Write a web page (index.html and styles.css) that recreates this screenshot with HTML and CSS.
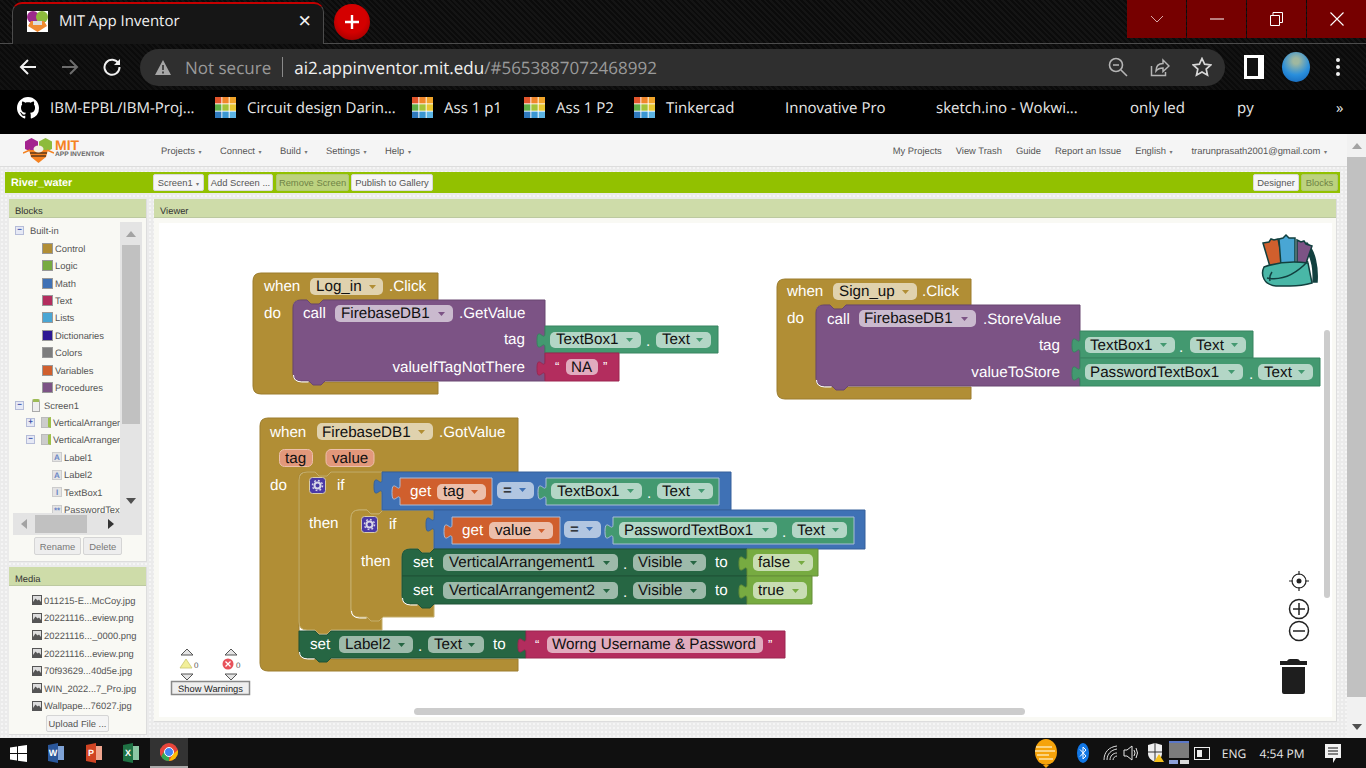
FILE: index.html
```html
<!DOCTYPE html>
<html lang="en">
<head>
    <meta charset="UTF-8">
    <title>MIT App Inventor</title>
    <link rel="stylesheet" href="styles.css">
</head>
<body>

<!-- shared little pictures -->
<svg class="defs" width="0" height="0">
    <symbol id="tinker" viewBox="0 0 21 21">
        <rect width="21" height="21" fill="#fff"/>
        <rect x="0" y="0" width="6.4" height="6.4" fill="#e2552c"/><rect x="7.3" y="0" width="6.4" height="6.4" fill="#f0862a"/><rect x="14.6" y="0" width="6.4" height="6.4" fill="#f0a42a"/>
        <rect x="0" y="7.3" width="6.4" height="6.4" fill="#5fae45"/><rect x="7.3" y="7.3" width="6.4" height="6.4" fill="#a5c338"/><rect x="14.6" y="7.3" width="6.4" height="6.4" fill="#e8c631"/>
        <rect x="0" y="14.6" width="6.4" height="6.4" fill="#2f79bd"/><rect x="7.3" y="14.6" width="6.4" height="6.4" fill="#3b97d3"/><rect x="14.6" y="14.6" width="6.4" height="6.4" fill="#5cb4e4"/>
    </symbol>
    <symbol id="pic" viewBox="0 0 10 10">
        <rect width="10" height="10" fill="#555"/><rect x="1" y="1" width="8" height="6" fill="#ddd"/><path d="M1 7l2.500-3.500 2 2 1.500-1 2 2.500z" fill="#555"/>
    </symbol>
</svg>

<div class="tabstrip">
    <div class="tab">
        <svg class="favicon" viewBox="0 0 21 21">
            <rect width="21" height="21" fill="#fff"/>
            <circle cx="6" cy="6" r="6" fill="#9c2a8c"/><circle cx="15" cy="6" r="6" fill="#8dbb3c"/>
            <path d="M4 10h13l3 5-9.500 6-9.500-6z" fill="#f08a30"/><rect x="6" y="10" width="9" height="4" fill="#ddd"/>
        </svg>
        <span class="tab-title">MIT App Inventor</span>
        <span class="tab-close">×</span>
    </div>
    <div class="newtab"><svg width="16" height="16" viewBox="0 0 16 16"><path d="M8 1v14M1 8h14" stroke="#fff" stroke-width="2.400"/></svg></div>
    <div class="winctl">
        <div class="wc"><svg width="14" height="8" viewBox="0 0 14 8"><path d="M1 1l6 6 6-6" fill="none" stroke="#d9a9a9"/></svg></div>
        <div class="wc"><svg width="14" height="2" viewBox="0 0 14 2"><path d="M0 1h14" stroke="#fff"/></svg></div>
        <div class="wc"><svg width="13" height="14" viewBox="0 0 13 14"><path d="M.5 3.500h9v10h-9zM3 3.500v-3h9.500v10h-3" fill="none" stroke="#fff"/></svg></div>
        <div class="wc"><svg width="14" height="14" viewBox="0 0 14 14"><path d="M.5.500l13 13M13.500.500l-13 13" stroke="#fff" stroke-width="1.100"/></svg></div>
    </div>
</div>

<div class="toolbar">
    <div class="tbtn"><svg width="18" height="18" viewBox="0 0 18 18"><path d="M17 9H2M9 2L2 9l7 7" fill="none" stroke="#f1f1f1" stroke-width="2"/></svg></div>
    <div class="tbtn"><svg width="18" height="18" viewBox="0 0 18 18"><path d="M1 9h15M9 2l7 7-7 7" fill="none" stroke="#6d6d6d" stroke-width="2"/></svg></div>
    <div class="tbtn"><svg width="18" height="18" viewBox="0 0 18 18"><path d="M15.500 5.500A7.500 7.500 0 1 0 16.500 9" fill="none" stroke="#f1f1f1" stroke-width="2"/><path d="M17 1v6h-6z" fill="#f1f1f1"/></svg></div>
    <div class="omnibox">
        <svg class="warn" width="16" height="15" viewBox="0 0 16 15"><path d="M8 0l8 15H0z" fill="#a6a6a6"/><path d="M8 5v5M8 11.500v2" stroke="#2f2f2f" stroke-width="1.600"/></svg>
        <span class="notsecure">Not secure</span>
        <span class="divider"></span>
        <span class="url">ai2.appinventor.mit.edu<span class="url-dim">/#5653887072468992</span></span>
        <div class="omni-icons">
            <svg width="20" height="20" viewBox="0 0 20 20"><circle cx="8" cy="8" r="6.500" fill="none" stroke="#b5b5b5" stroke-width="1.600"/><path d="M5 8h6M13 13l6 6" stroke="#b5b5b5" stroke-width="1.600"/></svg>
            <svg width="20" height="20" viewBox="0 0 20 20"><path d="M1.500 9v9.500h14V15" fill="none" stroke="#b5b5b5" stroke-width="1.500"/><path d="M6 14c0-5 3-7.500 7-7.500V3l6 6-6 5.500V11c-3 0-5 .5-7 3z" fill="none" stroke="#b5b5b5" stroke-width="1.500"/></svg>
            <svg width="20" height="20" viewBox="0 0 20 20"><path d="M10 1.500l2.600 5.700 6.200.7-4.600 4.200 1.300 6.100-5.500-3.100-5.500 3.100 1.300-6.100L1.200 7.900l6.200-.7z" fill="none" stroke="#d8d8d8" stroke-width="1.700"/></svg>
        </div>
    </div>
    <div class="tbtn tbtn-first"><span class="sidebar-ico"></span></div>
    <div class="tbtn"><span class="avatar"></span></div>
    <div class="tbtn"><svg width="4" height="18" viewBox="0 0 4 18"><circle cx="2" cy="2" r="2" fill="#f1f1f1"/><circle cx="2" cy="9" r="2" fill="#f1f1f1"/><circle cx="2" cy="16" r="2" fill="#f1f1f1"/></svg></div>
</div>

<div class="bookmarks">
    <div class="bm"><svg width="22" height="22" viewBox="0 0 16 16"><path fill="#fff" d="M8 0C3.580 0 0 3.580 0 8c0 3.540 2.290 6.530 5.470 7.590.4.070.55-.17.55-.38 0-.19-.01-.82-.01-1.490-2.010.37-2.530-.49-2.690-.94-.09-.23-.48-.94-.82-1.130-.28-.15-.68-.52-.01-.53.630-.01 1.080.58 1.230.82.720 1.210 1.870.87 2.330.66.070-.52.280-.87.510-1.070-1.780-.2-3.640-.89-3.640-3.950 0-.87.310-1.590.82-2.150-.08-.2-.36-1.020.08-2.120 0 0 .67-.21 2.200.82.640-.18 1.320-.27 2-.27s1.360.09 2 .27c1.530-1.040 2.200-.82 2.200-.82.440 1.100.16 1.920.08 2.120.51.560.82 1.270.82 2.150 0 3.070-1.870 3.750-3.650 3.950.29.250.54.730.54 1.480 0 1.070-.01 1.930-.01 2.200 0 .21.150.46.550.38A8.010 8.010 0 0 0 16 8c0-4.420-3.580-8-8-8z"/></svg><span>IBM-EPBL/IBM-Proj...</span></div>
    <div class="bm"><svg width="21" height="21"><use href="#tinker"/></svg><span>Circuit design Darin...</span></div>
    <div class="bm"><svg width="21" height="21"><use href="#tinker"/></svg><span>Ass 1 p1</span></div>
    <div class="bm"><svg width="21" height="21"><use href="#tinker"/></svg><span>Ass 1 P2</span></div>
    <div class="bm"><svg width="21" height="21"><use href="#tinker"/></svg><span>Tinkercad</span></div>
    <div class="bm"><span>Innovative Pro</span></div>
    <div class="bm"><span>sketch.ino - Wokwi...</span></div>
    <div class="bm"><span>only led</span></div>
    <div class="bm"><span>py</span></div>
    <div class="bm"><span>»</span></div>
</div>

<div class="page">
    <div class="app">
        <div class="topnav">
            <div class="logo">
                <svg width="31" height="25" viewBox="0 0 31 25">
                    <path d="M2 3.500l6.500-3.500 6.500 3.500v7.500l-6.500 3-6.500-3z" fill="#a3238e"/><path d="M16 3.500l6.500-3.500 6.500 3.500v7.500l-6.500 3-6.500-3z" fill="#8dbb3c"/>
                    <path d="M6 12h19l-2 7-7.500 6-7.500-6z" fill="#f58220"/><path d="M7 15h17M8 18h15" stroke="#5b3a1a" stroke-width="1.300"/>
                    <path d="M0 15l7-3M31 15l-7-3" stroke="#f58220" stroke-width="1.500"/><ellipse cx="15.500" cy="11" rx="5" ry="3.500" fill="#f3efe2"/>
                </svg>
                <div class="logo-text"><span class="logo-mit">MIT</span><span class="logo-sub">APP INVENTOR</span></div>
            </div>
            <div class="menu">
                <span>Projects <i>▾</i></span><span>Connect <i>▾</i></span><span>Build <i>▾</i></span><span>Settings <i>▾</i></span><span>Help <i>▾</i></span>
            </div>
            <div class="menu-right">
                <span>My Projects</span><span>View Trash</span><span>Guide</span><span>Report an Issue</span><span>English <i>▾</i></span><span class="email">trarunprasath2001@gmail.com <i>▾</i></span>
            </div>
        </div>

        <div class="greenbar">
            <span class="project">River_water</span>
            <button class="gbtn b-screen">Screen1 <i>▾</i></button>
            <button class="gbtn b-add">Add Screen ...</button>
            <button class="gbtn b-remove off">Remove Screen</button>
            <button class="gbtn b-publish">Publish to Gallery</button>
            <button class="gbtn b-designer">Designer</button>
            <button class="gbtn b-blocks off">Blocks</button>
        </div>

        <div class="panels">
            <div class="leftcol">
                <div class="panel blocks-panel">
                    <div class="panel-head">Blocks</div>
                    <div class="panel-body">
                        <div class="treebox">
                            <div class="tree">
                                <div class="row l0"><span class="tog">−</span><span class="lbl-b">Built-in</span></div>
                                <div class="row cat"><span class="sw c-control"></span>Control</div>
                                <div class="row cat"><span class="sw c-logic"></span>Logic</div>
                                <div class="row cat"><span class="sw c-math"></span>Math</div>
                                <div class="row cat"><span class="sw c-text"></span>Text</div>
                                <div class="row cat"><span class="sw c-lists"></span>Lists</div>
                                <div class="row cat"><span class="sw c-dict"></span>Dictionaries</div>
                                <div class="row cat"><span class="sw c-colors"></span>Colors</div>
                                <div class="row cat"><span class="sw c-vars"></span>Variables</div>
                                <div class="row cat"><span class="sw c-procs"></span>Procedures</div>
                                <div class="row l0"><span class="tog">−</span><span class="ico-screen"></span>Screen1</div>
                                <div class="row l1"><span class="tog">+</span><span class="ico-va"></span>VerticalArrangement1</div>
                                <div class="row l1"><span class="tog">−</span><span class="ico-va"></span>VerticalArrangement2</div>
                                <div class="row l2"><span class="ico-c">A</span>Label1</div>
                                <div class="row l2"><span class="ico-c">A</span>Label2</div>
                                <div class="row l2"><span class="ico-c">I</span>TextBox1</div>
                                <div class="row l2"><span class="ico-c">**</span>PasswordTextBox1</div>
                            </div>
                            <div class="vscroll"><span class="sb-up"></span><span class="vthumb"></span><span class="sb-down"></span></div>
                        </div>
                        <div class="hscroll"><span class="sb-left"></span><span class="hthumb"></span><span class="sb-right"></span></div>
                        <div class="panel-btns"><button class="pbtn">Rename</button><button class="pbtn">Delete</button></div>
                    </div>
                </div>
                <div class="panel media-panel">
                    <div class="panel-head">Media</div>
                    <div class="panel-body media-body">
                        <div class="media-row"><svg width="10" height="10"><use href="#pic"/></svg>011215-E...McCoy.jpg</div>
                        <div class="media-row"><svg width="10" height="10"><use href="#pic"/></svg>20221116...eview.png</div>
                        <div class="media-row"><svg width="10" height="10"><use href="#pic"/></svg>20221116..._0000.png</div>
                        <div class="media-row"><svg width="10" height="10"><use href="#pic"/></svg>20221116...eview.png</div>
                        <div class="media-row"><svg width="10" height="10"><use href="#pic"/></svg>70f93629...40d5e.jpg</div>
                        <div class="media-row"><svg width="10" height="10"><use href="#pic"/></svg>WIN_2022...7_Pro.jpg</div>
                        <div class="media-row"><svg width="10" height="10"><use href="#pic"/></svg>Wallpape...76027.jpg</div>
                        <button class="pbtn upload">Upload File ...</button>
                    </div>
                </div>
            </div>

            <div class="panel viewer">
                <div class="panel-head">Viewer</div>
                <div class="viewer-body">
                    <!-- workspace: viewBox is in page coordinates -->
                    <svg class="workspace" width="1173" height="494" viewBox="159 223 1173 494">

                        <!-- Log_in.Click -->
                        <path class="k brown" d="M261 273H438V300H323l-4 4h-8l-4-4H299q-6 0-6 6V375q0 7 7 7H438V394H261q-8 0-8-8V281q0-8 8-8z"/>
                        <text class="w" x="264" y="291">when</text>
                        <rect class="f" x="310" y="278" width="73" height="17" rx="5"/><text class="t" x="316" y="291">Log_in</text><path class="ar-brown" d="M369 285h7l-3.500 4z"/>
                        <text class="w" x="389" y="291">.Click</text>
                        <text class="w" x="264" y="318">do</text>
                        <path class="k purple" d="M293 308q0-8 8-8h6l4 4h8l4-4H545V381H325l-4 4h-8l-4-4h-8q-8 0-8-8z"/>
                        <path class="gap" d="M293.500 375q0 6.500 8 7h7"/>
                        <text class="w" x="303" y="318">call</text>
                        <rect class="f" x="335" y="305" width="118" height="17" rx="5"/><text class="t" x="341" y="318">FirebaseDB1</text><path class="ar-purple" d="M438 312h7l-3.500 4z"/>
                        <text class="w" x="459" y="318">.GetValue</text>
                        <text class="w e" x="525" y="344">tag</text>
                        <text class="w e" x="525" y="372">valueIfTagNotThere</text>
                        <path class="k green" d="M545 326H718V353H545V348c0-10-8 8-8-7.500s8 2.500 8-7.500z"/>
                        <rect class="f" x="550" y="332" width="91" height="16" rx="5"/><text class="t" x="556" y="344">TextBox1</text><path class="ar-green" d="M626 338h7l-3.500 4z"/>
                        <text class="w" x="646" y="346">.</text>
                        <rect class="f" x="656" y="332" width="55" height="16" rx="5"/><text class="t" x="662" y="344">Text</text><path class="ar-green" d="M696 338h7l-3.500 4z"/>
                        <path class="k pink" d="M545 353H619V381H545V376c0-10-8 8-8-7.500s8 2.500 8-7.500z"/>
                        <text class="q" x="555" y="371">“</text>
                        <rect class="f" x="566" y="359" width="32" height="16" rx="5"/><text class="t" x="571" y="372">NA</text>
                        <text class="q" x="603" y="371">”</text>

                        <!-- Sign_up.Click -->
                        <path class="k brown" d="M785 279H971V305H846l-4 4h-8l-4-4H822q-6 0-6 6V380q0 7 7 7H971V399H785q-8 0-8-8V287q0-8 8-8z"/>
                        <text class="w" x="787" y="296">when</text>
                        <rect class="f" x="833" y="283" width="84" height="17" rx="5"/><text class="t" x="839" y="296">Sign_up</text><path class="ar-brown" d="M902 290h7l-3.500 4z"/>
                        <text class="w" x="922" y="296">.Click</text>
                        <text class="w" x="787" y="323">do</text>
                        <path class="k purple" d="M816 313q0-8 8-8h6l4 4h8l4-4H1080V386H848l-4 4h-8l-4-4h-8q-8 0-8-8z"/>
                        <path class="gap" d="M816.500 380q0 6.500 8 7h7"/>
                        <text class="w" x="827" y="324">call</text>
                        <rect class="f" x="859" y="310" width="117" height="17" rx="5"/><text class="t" x="864" y="323">FirebaseDB1</text><path class="ar-purple" d="M961 317h7l-3.500 4z"/>
                        <text class="w" x="983" y="324">.StoreValue</text>
                        <text class="w e" x="1060" y="350">tag</text>
                        <text class="w e" x="1060" y="377">valueToStore</text>
                        <path class="k green" d="M1080 331H1253V358H1080V353c0-10-8 8-8-7.500s8 2.500 8-7.500z"/>
                        <rect class="f" x="1085" y="337" width="90" height="16" rx="5"/><text class="t" x="1090" y="350">TextBox1</text><path class="ar-green" d="M1160 343h7l-3.500 4z"/>
                        <text class="w" x="1179" y="352">.</text>
                        <rect class="f" x="1190" y="337" width="56" height="16" rx="5"/><text class="t" x="1196" y="350">Text</text><path class="ar-green" d="M1231 343h7l-3.500 4z"/>
                        <path class="k green" d="M1080 358H1320V386H1080V381c0-10-8 8-8-7.500s8 2.500 8-7.500z"/>
                        <rect class="f" x="1085" y="364" width="158" height="16" rx="5"/><text class="t" x="1090" y="377">PasswordTextBox1</text><path class="ar-green" d="M1228 370h7l-3.500 4z"/>
                        <text class="w" x="1249" y="379">.</text>
                        <rect class="f" x="1258" y="364" width="55" height="16" rx="5"/><text class="t" x="1264" y="377">Text</text><path class="ar-green" d="M1298 370h7l-3.500 4z"/>

                        <!-- FirebaseDB1.GotValue -->
                        <path class="k brown" d="M268 418H518V472H331l-4 4h-8l-4-4H305q-6 0-6 6V652q0 7 7 7H518V671H268q-8 0-8-8V426q0-8 8-8z"/>
                        <text class="w" x="270" y="437">when</text>
                        <rect class="f" x="317" y="423" width="116" height="17" rx="5"/><text class="t" x="322" y="437">FirebaseDB1</text><path class="ar-brown" d="M418 430h7l-3.500 4z"/>
                        <text class="w" x="439" y="437">.GotValue</text>
                        <rect class="pill" x="279.500" y="449.500" width="33" height="17" rx="5"/><text class="t" x="285" y="463">tag</text>
                        <rect class="pill" x="326" y="449.500" width="48" height="17" rx="5"/><text class="t" x="332" y="463">value</text>
                        <text class="w" x="270" y="490">do</text>

                        <!-- outer if -->
                        <path class="k brown hl" d="M307 472h8l4 4h8l4-4H382V510H383l-4 4h-8l-4-4H359q-8 0-8 8V610q0 7 7 7H382V630H331l-4 4h-8l-4-4H307q-8 0-8-8V480q0-8 8-8z"/>
                        <rect class="mut" x="309.500" y="477.500" width="16" height="16" rx="3"/>
                        <circle class="gear" cx="317.500" cy="485.500" r="3"/><circle class="teeth" cx="317.500" cy="485.500" r="5"/>
                        <text class="w" x="337" y="490">if</text>
                        <text class="w" x="309" y="528">then</text>

                        <!-- inner if -->
                        <path class="k brown hl" d="M359 510h8l4 4h8l4-4H434V549H434l-4 4h-8l-4-4H410q-8 0-8 8V597q0 7 7 7H434V617H383l-4 4h-8l-4-4H359q-8 0-8-8V518q0-8 8-8z"/>
                        <path class="gap" d="M351.500 611q0 6.500 8 7h7"/>
                        <rect class="mut" x="361.500" y="516.500" width="16" height="16" rx="3"/>
                        <circle class="gear" cx="369.500" cy="524.500" r="3"/><circle class="teeth" cx="369.500" cy="524.500" r="5"/>
                        <text class="w" x="389" y="529">if</text>
                        <text class="w" x="361" y="566">then</text>

                        <!-- first condition -->
                        <path class="k blue" d="M382 472H731V510H382V494c0-10-8 8-8-7.500s8 2.500 8-7.500z"/>
                        <path class="k orange ol" d="M400 478H492V505H400V500c0-10-8 8-8-7.500s8 2.500 8-7.500z"/>
                        <text class="w" x="410" y="496">get</text>
                        <rect class="f" x="437" y="484" width="49" height="16" rx="5"/><text class="t" x="443" y="496">tag</text><path class="ar-orange" d="M471 490h7l-3.500 4z"/>
                        <rect class="f" x="497" y="482" width="37" height="17" rx="5"/><text class="t" x="503" y="495">=</text><path class="ar-blue" d="M519 488h7l-3.500 4z"/>
                        <path class="k green ol" d="M546 478H719V505H546V500c0-10-8 8-8-7.500s8 2.500 8-7.500z"/>
                        <rect class="f" x="551" y="483" width="91" height="16" rx="5"/><text class="t" x="557" y="496">TextBox1</text><path class="ar-green" d="M627 489h7l-3.500 4z"/>
                        <text class="w" x="647" y="498">.</text>
                        <rect class="f" x="657" y="483" width="56" height="16" rx="5"/><text class="t" x="662" y="496">Text</text><path class="ar-green" d="M698 489h7l-3.500 4z"/>

                        <!-- second condition -->
                        <path class="k blue" d="M434 510H865V549H434V532c0-10-8 8-8-7.500s8 2.500 8-7.500z"/>
                        <path class="k orange ol" d="M452 517H560V544H452V539c0-10-8 8-8-7.500s8 2.500 8-7.500z"/>
                        <text class="w" x="462" y="535">get</text>
                        <rect class="f" x="489" y="522" width="64" height="17" rx="5"/><text class="t" x="495" y="535">value</text><path class="ar-orange" d="M538 529h7l-3.500 4z"/>
                        <rect class="f" x="564" y="521" width="37" height="17" rx="5"/><text class="t" x="570" y="534">=</text><path class="ar-blue" d="M586 527h7l-3.500 4z"/>
                        <path class="k green ol" d="M613 517H854V544H613V539c0-10-8 8-8-7.500s8 2.500 8-7.500z"/>
                        <rect class="f" x="619" y="522" width="158" height="16" rx="5"/><text class="t" x="624" y="535">PasswordTextBox1</text><path class="ar-green" d="M762 528h7l-3.500 4z"/>
                        <text class="w" x="782" y="537">.</text>
                        <rect class="f" x="792" y="522" width="55" height="16" rx="5"/><text class="t" x="797" y="535">Text</text><path class="ar-green" d="M832 528h7l-3.500 4z"/>

                        <!-- set Visible rows -->
                        <path class="k dgreen" d="M410 549h8l4 4h8l4-4H747V576H402V557q0-8 8-8z"/>
                        <text class="w" x="413" y="567">set</text>
                        <rect class="fd" x="443" y="554" width="175" height="17" rx="5"/><text class="t" x="449" y="567">VerticalArrangement1</text><path class="ar-dgreen" d="M603 561h7l-3.500 4z"/>
                        <text class="w" x="623" y="569">.</text>
                        <rect class="fd" x="633" y="554" width="73" height="17" rx="5"/><text class="t" x="638" y="567">Visible</text><path class="ar-dgreen" d="M690 561h7l-3.500 4z"/>
                        <text class="w" x="715" y="567">to</text>
                        <path class="k lgreen" d="M747 549H818V576H747V571c0-10-8 8-8-7.500s8 2.500 8-7.500z"/>
                        <rect class="f" x="753" y="554" width="60" height="17" rx="5"/><text class="t" x="758" y="567">false</text><path class="ar-lgreen" d="M798 561h7l-3.500 4z"/>

                        <path class="k dgreen" d="M402 576H747V604H434l-4 4h-8l-4-4H410q-8 0-8-8z"/>
                        <path class="gap" d="M402.500 598q0 6.500 8 7h7"/>
                        <text class="w" x="413" y="595">set</text>
                        <rect class="fd" x="443" y="582" width="175" height="17" rx="5"/><text class="t" x="449" y="595">VerticalArrangement2</text><path class="ar-dgreen" d="M603 589h7l-3.500 4z"/>
                        <text class="w" x="623" y="597">.</text>
                        <rect class="fd" x="633" y="582" width="73" height="17" rx="5"/><text class="t" x="638" y="595">Visible</text><path class="ar-dgreen" d="M690 589h7l-3.500 4z"/>
                        <text class="w" x="715" y="595">to</text>
                        <path class="k lgreen" d="M747 576H812V604H747V599c0-10-8 8-8-7.500s8 2.500 8-7.500z"/>
                        <rect class="f" x="753" y="582" width="54" height="17" rx="5"/><text class="t" x="758" y="595">true</text><path class="ar-lgreen" d="M792 589h7l-3.500 4z"/>

                        <!-- set Label2.Text -->
                        <path class="k dgreen" d="M299 631h16l4 4h8l4-4H526V658H331l-4 4h-8l-4-4H307q-8 0-8-8z"/>
                        <path class="gap" d="M299.500 652q0 6.500 8 7h7"/>
                        <text class="w" x="310" y="649">set</text>
                        <rect class="fd" x="339" y="636" width="74" height="17" rx="5"/><text class="t" x="345" y="649">Label2</text><path class="ar-dgreen" d="M398 643h7l-3.500 4z"/>
                        <text class="w" x="418" y="651">.</text>
                        <rect class="fd" x="428" y="636" width="56" height="17" rx="5"/><text class="t" x="434" y="649">Text</text><path class="ar-dgreen" d="M468 643h7l-3.500 4z"/>
                        <text class="w" x="493" y="649">to</text>
                        <path class="k pink" d="M526 631H785V658H526V653c0-10-8 8-8-7.500s8 2.500 8-7.500z"/>
                        <text class="q" x="535" y="649">“</text>
                        <rect class="f" x="547" y="636" width="216" height="17" rx="5"/><text class="t" x="552" y="649">Worng Username &amp; Password</text>
                        <text class="q" x="768" y="649">”</text>

                        <!-- backpack -->
                        <path class="bag-s" d="M1307 243c8 8 11 24 10 39h-4c1-13-2-26-8-35z" fill="#12403f"/>
                        <path class="bag-s" d="M1263 243l6-1 2-3 3 1 4-1 6 28-13 3z" fill="#d05f2d"/>
                        <path class="bag-s" d="M1279 239l4-1 3-3 3 3 6 0v27l-14 1z" fill="#49a6d4"/>
                        <path class="bag-s" d="M1297 240l4 2 3-1 2 3 6 2-7 20-8-1z" fill="#7c5385"/>
                        <path class="bag-s" d="M1264 267q20-7 44-4l4 20q-10 3-22 3h-14q-9-1-12-7-3-6 0-12z" fill="#49b7a7"/>
                        <path d="M1267 278c16 3 30-5 41-17M1272 272q-3 4-2 9" fill="none" stroke="#12403f" stroke-width="1.500"/>

                        <!-- warnings -->
                        <path class="wa" d="M181 655l6-6 6 6zM181 674l6 6 6-6zM225 655l6-6 6 6zM225 674l6 6 6-6z"/>
                        <path d="M186 659l6 9h-12z" fill="#f2ef9a" stroke="#c9c66e" stroke-width=".8"/>
                        <text class="n0" x="194" y="668">0</text>
                        <circle cx="228" cy="664" r="5.500" fill="#e8515a"/><path d="M225.500 661.500l5 5M230.500 661.500l-5 5" stroke="#fff" stroke-width="1.300"/>
                        <text class="n0" x="236" y="668">0</text>
                        <rect class="wbtn" x="171.500" y="681.500" width="78" height="13"/>
                        <text class="wtxt" x="210.500" y="691.500">Show Warnings</text>

                        <!-- zoom controls -->
                        <circle class="zc thin" cx="1299" cy="581" r="7"/><circle cx="1299" cy="581" r="2.500" fill="#222"/>
                        <path class="zc thin" d="M1299 571v4M1299 587v4M1289 581h4M1305 581h4"/>
                        <circle class="zc" cx="1299" cy="609" r="9.500"/><path class="zc" d="M1293 609h12M1299 603v12"/>
                        <circle class="zc" cx="1299" cy="631" r="9.500"/><path class="zc" d="M1293 631h12"/>

                        <!-- trash -->
                        <path class="trash" d="M1280 661h7q1-2 3-2h7q2 0 3 2h7v4h-27zM1282 667h23v25q0 2-2 2h-19q-2 0-2-2z"/>

                        <!-- workspace scrollbars -->
                        <rect class="wsb" x="1324" y="330" width="6" height="268" rx="3"/>
                        <rect class="wsb" x="414" y="708" width="611" height="7" rx="3.500"/>
                    </svg>
                </div>
            </div>
        </div>
    </div>
    <div class="pagescroll"><span class="ps-up"></span><span class="ps-thumb"></span><span class="ps-down"></span></div>
</div>

<div class="taskbar">
    <div class="tb-app"><svg width="17" height="17" viewBox="0 0 17 17"><path d="M0 2.500l7-1v6.500H0zM8 1.300l9-1.300v8H8zM0 9h7v6.500l-7-1zM8 9h9v8l-9-1.300z" fill="#fff"/></svg></div>
    <div class="tb-app"><svg width="16" height="20" viewBox="0 0 16 20"><path d="M0 2l10-2v20L0 18z" fill="#2b579a"/><rect x="10" y="3" width="6" height="14" fill="#7fa3d6"/><text class="tb-l" x="5" y="13">W</text></svg></div>
    <div class="tb-app"><svg width="16" height="20" viewBox="0 0 16 20"><path d="M0 2l10-2v20L0 18z" fill="#d04423"/><rect x="10" y="3" width="6" height="14" fill="#f0a58e"/><text class="tb-l" x="5" y="13">P</text></svg></div>
    <div class="tb-app"><svg width="16" height="20" viewBox="0 0 16 20"><path d="M0 2l10-2v20L0 18z" fill="#1f7244"/><rect x="10" y="3" width="6" height="14" fill="#8cc7a4"/><text class="tb-l" x="5" y="13">X</text></svg></div>
    <div class="tb-app tb-active"><svg width="18" height="18" viewBox="0 0 18 18"><circle cx="9" cy="9" r="9" fill="#e8453c"/><path d="M9 9L1.500 14A9 9 0 0 1 1 4.800z" fill="#e8453c"/><path d="M9 18a9 9 0 0 1-7.800-4.500L5 7l4 2z" fill="#34a853"/><path d="M18 9a9 9 0 0 1-9 9l4-7 5-4z" fill="#fbbc05"/><circle cx="9" cy="9" r="4.500" fill="#4285f4" stroke="#fff"/></svg></div>
    <div class="tray">
        <div class="ti"><svg width="24" height="30" viewBox="0 0 24 30"><ellipse cx="12" cy="14" rx="11" ry="13" fill="#f5a30b"/><path d="M2 9h16M1 13h20M3 17h12M5 21h14" stroke="#fde3a8" stroke-width="1.600"/><path d="M9 27h6l-3 3z" fill="#f5a30b"/></svg></div>
        <div class="ti"><svg width="12" height="20" viewBox="0 0 12 20"><ellipse cx="6" cy="10" rx="6" ry="10" fill="#1177e6"/><path d="M3 6.500l6 6.500-3 3V4l3 3-6 6.500" fill="none" stroke="#fff"/></svg></div>
        <div class="ti"><svg width="16" height="16" viewBox="0 0 16 16"><path d="M1 15c0-8 5-13 13-14M4 15c0-6 4-10 10-11M7 15c0-4 3-7 7-7M10 15c0-2 2-4 4-4" fill="none" stroke="#ddd"/></svg></div>
        <div class="ti"><svg width="18" height="16" viewBox="0 0 18 16"><path d="M1 5h3l5-4v14l-5-4H1z" fill="none" stroke="#e6e6e6"/><path d="M11 5q2 3 0 6M13 3q3 5 0 10" fill="none" stroke="#e6e6e6"/></svg></div>
        <div class="ti"><svg width="18" height="20" viewBox="0 0 18 20"><path d="M1 2l7-2 7 2v8c0 5-3 7-7 9-4-2-7-4-7-9z" fill="#eee"/><path d="M8 0v19M1 9h14" stroke="#333"/><path d="M12 11l5 8H7z" fill="#f6c21c"/></svg></div>
        <div class="ti"><svg width="20" height="24" viewBox="0 0 20 24"><rect x="0" y="0" width="20" height="17" fill="#7c7c7c"/><rect x="0" y="0" width="20" height="2" fill="#5b78c8"/><rect x="0" y="19" width="9" height="4" fill="#8ca0d8"/><rect x="11" y="19" width="9" height="4" fill="#d8d8d8"/></svg></div>
        <div class="ti"><svg width="16" height="16" viewBox="0 0 16 16"><rect x=".5" y="2.500" width="15" height="12" fill="none" stroke="#eee"/><rect x="3" y="5" width="5" height="7" fill="#eee"/></svg></div>
        <div class="ti tray-txt">ENG</div>
        <div class="ti tray-txt">4:54 PM</div>
        <div class="ti"><svg width="16" height="19" viewBox="0 0 16 19"><path d="M0 0h16v14H11l-3 5v-5H0z" fill="#f2f2f2"/><path d="M3 4h10M3 7h10M3 10h10" stroke="#111"/></svg></div>
    </div>
</div>

</body>
</html>
```

FILE: styles.css
```css
html, body {
    margin: 0;
    height: 768px;
    overflow: hidden;
}
body {
    width: 1366px;
    display: flex;
    flex-direction: column;
    background: #000;
    font-family: "Liberation Sans", Arial, sans-serif;
    text-rendering: geometricPrecision;
}
.defs {
    position: absolute;
}

/* browser window */
.tabstrip {
    height: 43px;
    display: flex;
    align-items: flex-start;
    border-bottom: 1px solid #4c4c4c;
    background: #0b0b0b repeating-linear-gradient(45deg, #0b0b0b 0 2px, #141414 2px 4px);
}
.tab {
    width: 296px;
    height: 34px;
    margin: 2px 0 -1px 12px;
    padding: 0 0 6px 14px;
    display: flex;
    align-items: center;
    color: #f1f1f1;
    background: #161616;
    border: 1px solid #4c4c4c;
    border-top: 2px solid #c40000;
    border-bottom: 0;
    border-radius: 10px 10px 0 0;
}
.favicon {
    width: 21px;
    height: 21px;
}
.tab-title {
    margin-left: 11px;
    font: 15px "Open Sans", sans-serif;
}
.tab-close {
    margin-left: auto;
    margin-right: 12px;
    font-size: 22px;
}
.newtab {
    width: 36px;
    height: 36px;
    margin: 4px 0 0 10px;
    display: flex;
    align-items: center;
    justify-content: center;
    border-radius: 50%;
    background: radial-gradient(circle at 50% 40%, #d40000 50%, #8d0000);
}
.winctl {
    margin-left: auto;
    display: flex;
    gap: 1px;
}
.wc {
    width: 59px;
    height: 38px;
    display: flex;
    align-items: center;
    justify-content: center;
    background: #760000;
}
.toolbar {
    height: 46px;
    padding-left: 7px;
    display: flex;
    align-items: center;
    background: #0b0b0b repeating-linear-gradient(45deg, #0b0b0b 0 2px, #121212 2px 4px);
}
.tbtn {
    width: 42px;
    display: flex;
    justify-content: center;
    align-items: center;
}
.omnibox {
    width: 1085px;
    height: 37px;
    margin: 0 8px 0 7px;
    display: flex;
    align-items: center;
    border-radius: 19px;
    background: #2f2f2f;
    font: 17px "Open Sans", sans-serif;
}
.warn {
    margin-left: 15px;
}
.notsecure {
    margin-left: 14px;
    color: #9a9a9a;
}
.divider {
    width: 1px;
    height: 20px;
    margin: 0 11px;
    background: #8a8a8a;
}
.url {
    color: #f1f1f1;
}
.url-dim {
    color: #9a9a9a;
}
.omni-icons {
    margin-left: auto;
    margin-right: 13px;
    display: flex;
    gap: 22px;
}
.sidebar-ico {
    width: 11px;
    height: 18px;
    border: 3px solid #fff;
    border-right-width: 6px;
    background: #111;
}
.avatar {
    width: 28px;
    height: 30px;
    border-radius: 50%;
    background: radial-gradient(circle at 50% 30%, #9fb8a0 0 12%, #2a8fdc 55%, #0f5fb5);
}
.bookmarks {
    height: 44px;
    box-sizing: border-box;
    padding: 0 0 9px 17px;
    display: grid;
    grid-template-columns: 198px 197px 112px 110px 151px 151px 194px 107px 99px auto;
    align-items: center;
    color: #e8e8e8;
    font: 15px "Open Sans", sans-serif;
}
.bm {
    display: flex;
    align-items: center;
    gap: 11px;
    white-space: nowrap;
}

/* the App Inventor page */
.page {
    flex: 1;
    display: flex;
    min-height: 0;
    color: #555;
    font-size: 9.4px;
    background: #ebebeb radial-gradient(#f5f5f5 1px, transparent 1px) 0 0 / 4px 4px;
}
.app {
    width: 1347px;
}
.pagescroll {
    width: 19px;
    display: flex;
    flex-direction: column;
    align-items: center;
    background: #f1f1f1;
}
.ps-up {
    margin-top: 9px;
    border: 5px solid transparent;
    border-top: 0;
    border-bottom: 6px solid #a3a3a3;
}
.ps-thumb {
    width: 19px;
    height: 540px;
    margin-top: 8px;
    background: #c1c1c1;
}
.ps-down {
    margin-top: 27px;
    border: 5px solid transparent;
    border-bottom: 0;
    border-top: 6px solid #505050;
}
.topnav {
    height: 33px;
    padding-left: 23px;
    padding-right: 20px;
    display: flex;
    align-items: center;
    background: #f5f5f5;
    border-bottom: 1px solid #ddd;
    box-sizing: border-box;
}
.topnav i, .gbtn i {
    margin-left: 1px;
    font-style: normal;
    font-size: 6px;
    color: #777;
}
.logo {
    width: 138px;
    display: flex;
    gap: 1px;
}
.logo-text {
    display: flex;
    flex-direction: column;
    line-height: 1;
}
.logo-mit {
    color: #f58220;
    font-size: 14px;
    font-weight: bold;
}
.logo-sub {
    color: #666;
    font-size: 6.6px;
    font-weight: bold;
}
.menu {
    display: flex;
    gap: 18.5px;
}
.menu-right {
    margin-left: auto;
    display: flex;
    gap: 14px;
}
.email {
    margin-left: 5px;
}
.greenbar {
    height: 21px;
    margin: 5px 7px 0 5px;
    display: flex;
    align-items: center;
    background: #92c100;
}
.project {
    width: 148px;
    padding-left: 6px;
    box-sizing: border-box;
    color: #fff;
    font-size: 10.8px;
    font-weight: bold;
}
.gbtn {
    height: 17px;
    padding: 0;
    color: #555;
    font: 9.4px "Liberation Sans", Arial, sans-serif;
    background: #f6f6f6;
    border: 1px solid #d8d8d8;
    border-radius: 2px;
}
.gbtn.off {
    color: #6f8346;
    background: #bcd27f;
    border-color: #b0c873;
}
.b-screen { width: 51px; }
.b-add { width: 65px; margin-left: 4px; }
.b-remove { width: 73px; margin-left: 3px; }
.b-publish { width: 82px; margin-left: 2px; }
.b-designer { width: 46px; margin-left: auto; }
.b-blocks { width: 37px; margin: 0 2px; }
.panels {
    margin-top: 6px;
    padding-left: 9px;
    display: flex;
    gap: 7px;
}
.leftcol {
    width: 138px;
    display: flex;
    flex-direction: column;
    gap: 5px;
}
.panel {
    display: flex;
    flex-direction: column;
    box-sizing: border-box;
    background: #f9f9f4;
    border-right: 1px solid #ddd;
    border-bottom: 1px solid #ddd;
}
.panel-head {
    height: 19px;
    line-height: 23px;
    padding-left: 6px;
    flex: none;
    color: #333;
    font-size: 9.4px;
    background: #cedca9;
    border-bottom: 1px solid #bcc9a0;
    box-sizing: border-box;
}
.blocks-panel {
    height: 363px;
}
.media-panel {
    height: 168px;
}
.viewer {
    width: 1183px;
    height: 523px;
}
.viewer-body {
    padding: 5px 4px 5px 5px;
}
.workspace {
    display: block;
    background: #fff;
}
.panel-body {
    padding: 4px 4px 0;
}
.treebox {
    height: 291px;
    display: flex;
}
.tree {
    width: 108px;
    overflow: hidden;
}
.row {
    height: 17.44px;
    display: flex;
    align-items: center;
    white-space: nowrap;
}
.l0 { padding-left: 2px; }
.l1 { padding-left: 13px; }
.l2 { padding-left: 39px; }
.cat { padding-left: 29px; }
.tog {
    width: 7px;
    height: 7px;
    line-height: 6px;
    flex: none;
    text-align: center;
    color: #3a4fa8;
    font-size: 8px;
    font-weight: bold;
    background: #e6e9f5;
    border: 1px solid #b5bcd8;
}
.lbl-b {
    margin-left: 6px;
}
.sw {
    width: 9px;
    height: 9px;
    margin-right: 2px;
    flex: none;
    border: 1px solid #999;
}
.c-control { background: #b18e35; }
.c-logic { background: #77ab41; }
.c-math { background: #3f71b5; }
.c-text { background: #b32d5e; }
.c-lists { background: #49a6d4; }
.c-dict { background: #2d1894; }
.c-colors { background: #7d7d7d; }
.c-vars { background: #d05f2d; }
.c-procs { background: #7c5385; }
.ico-screen {
    width: 6px;
    height: 9px;
    margin: 0 4px 0 8px;
    flex: none;
    background: #eee;
    border: 1px solid #aaa;
    border-top: 3px solid #9dbb55;
    border-radius: 2px 2px 0 0;
}
.ico-va {
    width: 6px;
    height: 9px;
    margin: 0 2px 0 6px;
    flex: none;
    background: #ccc;
    border: 1px solid #bbb;
    border-right: 3px solid #9dc04a;
}
.ico-c {
    width: 10px;
    height: 10px;
    line-height: 9px;
    margin-right: 2px;
    flex: none;
    text-align: center;
    color: #6a86c4;
    font-size: 8px;
    font-weight: bold;
    background: #e4e4e4;
    border: 1px solid #ccc;
    box-sizing: border-box;
}
.vscroll {
    width: 22px;
    display: flex;
    flex-direction: column;
    align-items: center;
    background: #e4e4e4;
}
.sb-up {
    margin-top: 9px;
    border: 5px solid transparent;
    border-top: 0;
    border-bottom: 6px solid #a3a3a3;
}
.vthumb {
    width: 18px;
    height: 179px;
    margin-top: 8px;
    background: #c1c1c1;
}
.sb-down {
    margin-top: 74px;
    border: 5px solid transparent;
    border-bottom: 0;
    border-top: 6px solid #505050;
}
.hscroll {
    height: 22px;
    display: flex;
    align-items: center;
    background: #e4e4e4;
}
.sb-left {
    margin-left: 8px;
    border: 5px solid transparent;
    border-left: 0;
    border-right: 6px solid #a3a3a3;
}
.hthumb {
    width: 52px;
    height: 18px;
    margin-left: 8px;
    background: #c1c1c1;
}
.sb-right {
    margin-left: 21px;
    border: 5px solid transparent;
    border-right: 0;
    border-left: 6px solid #333;
}
.panel-btns {
    margin-top: 2px;
    display: flex;
    justify-content: center;
    gap: 2px;
    padding-left: 1px;
}
.pbtn {
    height: 18px;
    padding: 0 5px;
    color: #777;
    font: 9.4px "Liberation Sans", Arial, sans-serif;
    background: #eee;
    border: 1px solid #d5d5d5;
    border-radius: 2px;
}
.media-body {
    padding: 5.5px 0 0 23px;
}
.media-row {
    height: 17.6px;
    display: flex;
    align-items: center;
    gap: 2px;
    white-space: nowrap;
}
.upload {
    width: 63px;
    height: 17px;
    margin: 0 0 0 14px;
    padding: 0;
    color: #555;
    background: #f4f4f4;
}

/* blockly blocks */
.workspace text {
    font-family: "Liberation Sans", Arial, sans-serif;
    font-size: 15.2px;
}
.k { stroke-width: 1; }
.brown { fill: #b18e35; stroke: #9c7d2e; }
.purple { fill: #7c5385; stroke: #694670; }
.green { fill: #439970; stroke: #398460; }
.pink { fill: #b32d5e; stroke: #9b2751; }
.blue { fill: #3f71b5; stroke: #36619b; }
.orange { fill: #d05f2d; stroke: #b35227; }
.dgreen { fill: #266643; stroke: #1f5337; }
.lgreen { fill: #77ab41; stroke: #668f38; }
.hl { stroke: #c4ae6c; }
.ol { stroke: #a9bcd8; }
.gap { fill: none; stroke: #fff; stroke-width: 1; }
.w { fill: #fff; }
.e { text-anchor: end; }
.t { fill: #111; }
.workspace .q { fill: #fff; font-size: 13px; }
.f { fill: #fff; fill-opacity: .6; }
.fd { fill: #fff; fill-opacity: .55; }
.pill { fill: #e2987b; stroke: #edc0ab; }
.ar-brown { fill: #b18e35; }
.ar-purple { fill: #7c5385; }
.ar-green { fill: #439970; }
.ar-orange { fill: #d05f2d; }
.ar-blue { fill: #3f71b5; }
.ar-dgreen { fill: #266643; }
.ar-lgreen { fill: #77ab41; }
.mut { fill: #4a39a6; stroke: #d7ccab; }
.gear { fill: none; stroke: #d8d6e8; stroke-width: 2; }
.teeth { fill: none; stroke: #d8d6e8; stroke-width: 1.500; stroke-dasharray: 1.800 2.100; }
.bag-s { stroke: #12403f; stroke-width: 1.500; }
.wa { fill: #e4e4e4; stroke: #555; }
.workspace .n0 { fill: #555; font-size: 8px; }
.wbtn { fill: #eee; stroke: #888; stroke-width: 1.500; }
.workspace .wtxt { fill: #222; font-size: 9.3px; text-anchor: middle; }
.zc { fill: none; stroke: #222; stroke-width: 1.500; }
.thin { stroke-width: 1.200; }
.trash { fill: #1e1e1e; }
.wsb { fill: #ccc; }

/* windows taskbar */
.taskbar {
    height: 30px;
    display: flex;
    align-items: center;
    background: #101010;
}
.tb-app {
    width: 37.500px;
    height: 30px;
    display: flex;
    align-items: center;
    justify-content: center;
    box-sizing: border-box;
}
.tb-active {
    background: #333;
    border-bottom: 2px solid #aaa;
}
.tb-l {
    fill: #fff;
    font-size: 9px;
    font-weight: bold;
    text-anchor: middle;
}
.tray {
    margin-left: auto;
    padding-right: 10px;
    display: grid;
    grid-template-columns: 36px 38px 18px 23px 25px 22px 24px 40px 56px 46px;
    align-items: center;
    justify-items: center;
}
.ti {
    display: flex;
}
.tray-txt {
    color: #e8e8e8;
    font: 12px "Open Sans", sans-serif;
    white-space: nowrap;
}
```
